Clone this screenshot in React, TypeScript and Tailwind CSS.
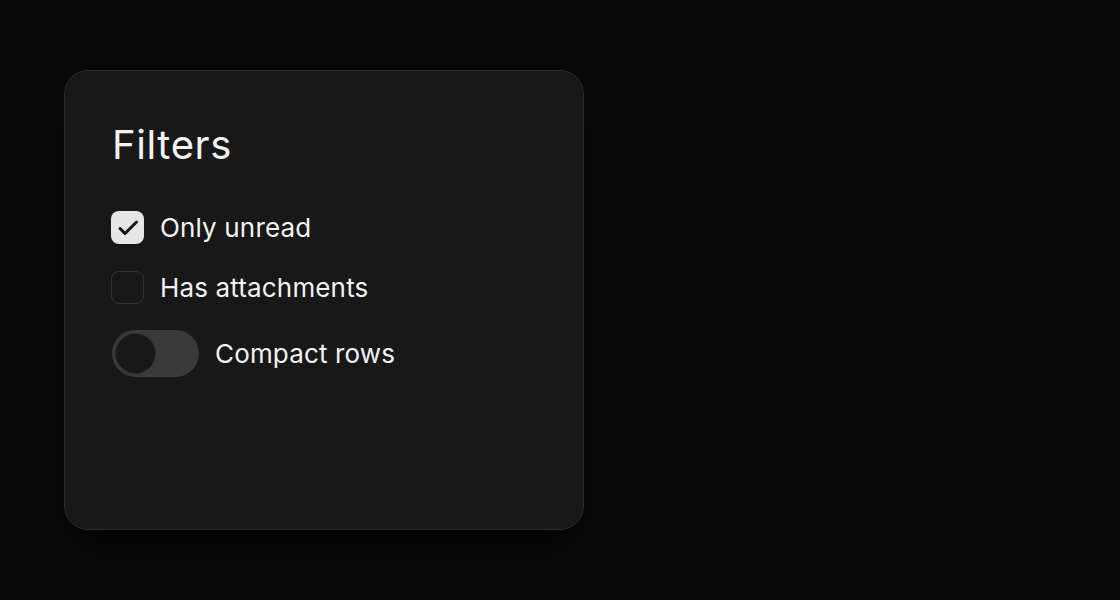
import { useState } from 'react'

function Checkbox({ checked, onChange }: { checked: boolean; onChange: () => void }) {
  return (
    <button
      type="button"
      onClick={onChange}
      className={
        checked
          ? 'flex h-[33px] w-[33px] shrink-0 items-center justify-center rounded-[8px] bg-[#e6e6e6]'
          : 'flex h-[33px] w-[33px] shrink-0 items-center justify-center rounded-[8px] border-[1.5px] border-[#333333] bg-transparent'
      }
    >
      {checked && (
        <svg width="24" height="24" viewBox="0 0 24 24" fill="none" stroke="#111111" strokeWidth="3" strokeLinecap="round" strokeLinejoin="round">
          <path d="M4 12.5l5 5L20.5 6" />
        </svg>
      )}
    </button>
  )
}

function Toggle({ on, onChange }: { on: boolean; onChange: () => void }) {
  return (
    <button
      type="button"
      onClick={onChange}
      className="relative ml-[1px] h-[47px] w-[87px] shrink-0 rounded-full bg-[#3a3a3a]"
    >
      <span
        className={
          on
            ? 'absolute top-[3px] left-[43px] h-[41px] w-[41px] rounded-full bg-[#e6e6e6]'
            : 'absolute top-[3px] left-[3px] h-[41px] w-[41px] rounded-full border border-[#2c2c2c] bg-[#181818]'
        }
      />
    </button>
  )
}

export default function App() {
  const [unread, setUnread] = useState(true)
  const [attach, setAttach] = useState(false)
  const [compact, setCompact] = useState(false)

  return (
    <div className="min-h-[600px] w-full bg-[#0a0a0a] pt-[70px] pl-[64px] font-['Inter',sans-serif] text-[#f2f2f2]">
      <div className="flex h-[460px] w-[520px] flex-col rounded-[24px] border border-[#2a2a2a] bg-[#181818] px-[46px] pt-[50px] shadow-[0_24px_60px_rgba(0,0,0,0.7)]">
        <h2 className="ml-[1px] text-[40px] leading-[48px] font-normal tracking-[0.6px]">Filters</h2>

        <div className="mt-[42px] flex flex-col">
          <label className="flex h-[33px] items-center gap-[16px]">
            <Checkbox checked={unread} onChange={() => setUnread(!unread)} />
            <span className="text-[26px] tracking-[0.15px]">Only unread</span>
          </label>
          <label className="mt-[27px] flex h-[33px] items-center gap-[16px]">
            <Checkbox checked={attach} onChange={() => setAttach(!attach)} />
            <span className="text-[26px] tracking-[0.15px]">Has attachments</span>
          </label>
          <label className="mt-[26px] flex h-[47px] items-center gap-[16px]">
            <Toggle on={compact} onChange={() => setCompact(!compact)} />
            <span className="text-[26px] tracking-[0.15px]">Compact rows</span>
          </label>
        </div>
      </div>
    </div>
  )
}
